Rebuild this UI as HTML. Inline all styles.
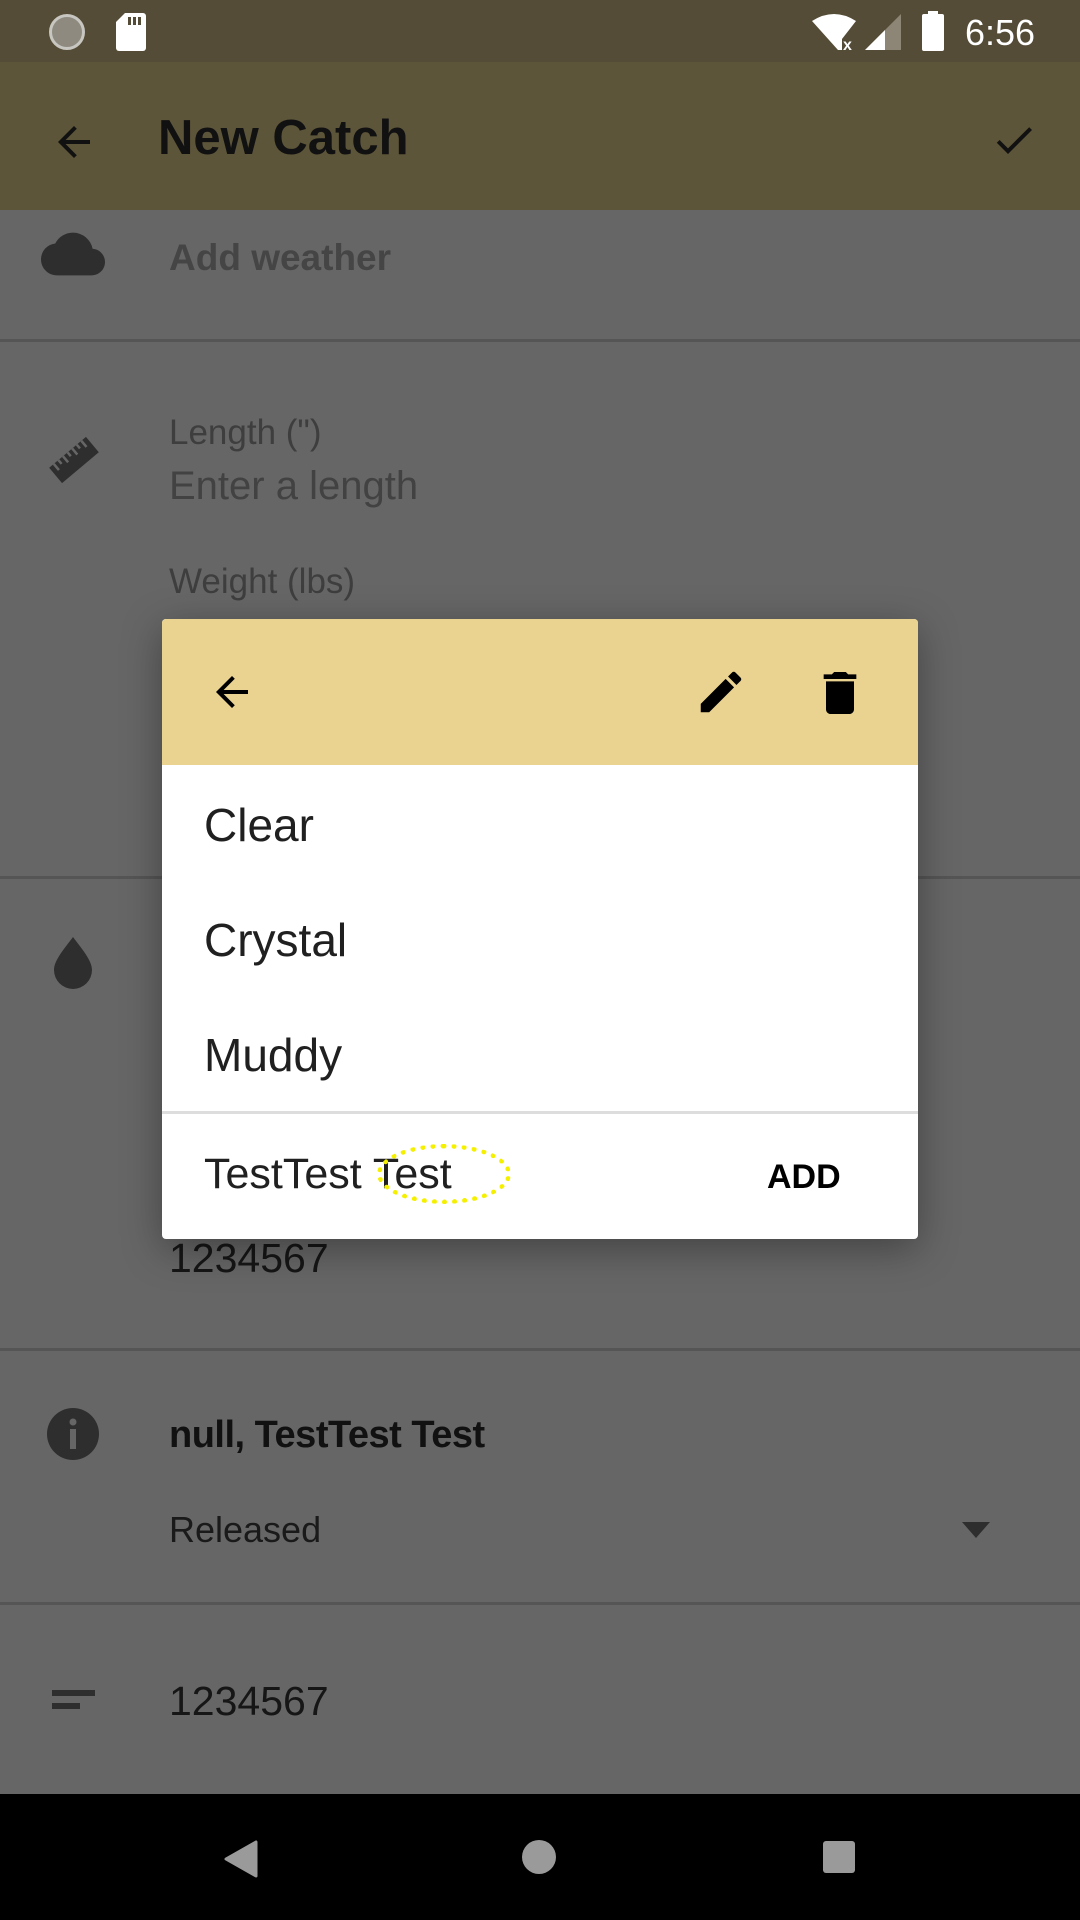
<!DOCTYPE html>
<html><head><meta charset="utf-8"><style>
*{margin:0;padding:0;box-sizing:border-box}
body{width:1080px;height:1920px;position:relative;overflow:hidden;background:#666;font-family:"Liberation Sans",sans-serif}
.t{position:absolute;white-space:nowrap;line-height:1}
.hr{position:absolute;left:0;width:1080px;height:3px;background:#555}
svg{position:absolute}
</style></head><body>
<div style="position:absolute;left:0;top:0;width:1080px;height:62px;background:#544c36"></div>
<div style="position:absolute;left:0;top:62px;width:1080px;height:148px;background:#5d5539"></div>
<div style="position:absolute;left:49px;top:14px;width:36px;height:36px;border-radius:50%;background:#8e8a80;border:3px solid #c8c6c0"></div>
<svg style="left:116px;top:13px" width="30" height="38" viewBox="0 0 30 38"><path d="M9 0H27a3 3 0 0 1 3 3V35a3 3 0 0 1-3 3H3a3 3 0 0 1-3-3V9Z" fill="#fff"/><rect x="12" y="4" width="3" height="8" fill="#544c36"/><rect x="17" y="4" width="3" height="8" fill="#544c36"/><rect x="22" y="4" width="3" height="8" fill="#544c36"/></svg>
<svg style="left:812px;top:13px" width="48" height="38" viewBox="0 0 48 38"><path d="M0 8Q22-6 44 8L30 26V37H26Z" fill="#fff"/><text x="31" y="37" font-size="16" font-weight="bold" fill="#fff" font-family="Liberation Sans">x</text></svg>
<svg style="left:865px;top:14px" width="36" height="36" viewBox="0 0 36 36"><path d="M36 0V36H0Z" fill="#8d8677"/><path d="M20 16V36H0Z" fill="#fff"/></svg>
<svg style="left:922px;top:11px" width="22" height="40" viewBox="0 0 22 40"><rect x="6" y="0" width="10" height="4" fill="#fff"/><rect x="0" y="3" width="22" height="37" rx="2" fill="#fff"/></svg>
<div class="t" style="left:965px;top:15px;font-size:36px;color:#fff">6:56</div>
<svg style="left:50px;top:118px" width="48" height="48" viewBox="0 0 24 24"><path d="M20 11H7.8l5.6-5.6L12 4l-8 8 8 8 1.4-1.4L7.8 13H20z" fill="#111"/></svg>
<div class="t" style="left:158px;top:114px;font-size:49px;color:#111;font-weight:bold">New Catch</div>
<svg style="left:990px;top:116px" width="48" height="48" viewBox="0 0 24 24"><path d="M9 16.2 4.8 12l-1.4 1.4L9 19 21 7l-1.4-1.4z" fill="#111"/></svg>
<svg style="left:41px;top:222px" width="64" height="64" viewBox="0 0 24 24"><path d="M19.35 10.04A7.49 7.49 0 0 0 12 4C9.11 4 6.6 5.64 5.35 8.04A5.99 5.99 0 0 0 0 14c0 3.31 2.69 6 6 6h13c2.76 0 5-2.24 5-5 0-2.64-2.05-4.780-4.65-4.96z" fill="#2e2e2e"/></svg>
<div class="t" style="left:169px;top:239px;font-size:37px;color:#454545;font-weight:bold">Add weather</div>
<div class="hr" style="top:339px"></div>
<svg style="left:44px;top:430px" width="60" height="60" viewBox="0 0 60 60"><g transform="rotate(-40 30 30)"><rect x="6" y="20" width="48" height="20" fill="#2e2e2e"/><g stroke="#666" stroke-width="2.5"><path d="M12 20v8M18 20v5M24 20v8M30 20v5M36 20v8M42 20v5M48 20v8"/></g></g></svg>
<div class="t" style="left:169px;top:415px;font-size:35px;color:#3e3e3e">Length (")</div>
<div class="t" style="left:169px;top:466px;font-size:40px;color:#424242">Enter a length</div>
<div class="t" style="left:169px;top:564px;font-size:35px;color:#3e3e3e">Weight (lbs)</div>
<div class="hr" style="top:876px"></div>
<svg style="left:53px;top:936px" width="40" height="54" viewBox="0 0 40 54"><path d="M20 1C12 12 1 24 1 34a19 19 0 0 0 38 0C39 24 28 12 20 1Z" fill="#2e2e2e"/></svg>
<div class="t" style="left:169px;top:1238px;font-size:41px;color:#161616">1234567</div>
<div class="hr" style="top:1348px"></div>
<svg style="left:47px;top:1408px" width="52" height="52" viewBox="0 0 52 52"><ellipse cx="26" cy="26" rx="26" ry="26" fill="#2e2e2e"/><rect x="23" y="21" width="6" height="20" fill="#666"/><circle cx="26" cy="14" r="3.5" fill="#666"/></svg>
<div class="t" style="left:169px;top:1416px;font-size:38px;color:#111;font-weight:bold;letter-spacing:-0.5px">null, TestTest Test</div>
<div class="t" style="left:169px;top:1512px;font-size:36px;color:#1a1a1a">Released</div>
<svg style="left:962px;top:1522px" width="28" height="16" viewBox="0 0 28 16"><path d="M0 0H28L14 16Z" fill="#2e2e2e"/></svg>
<div class="hr" style="top:1602px"></div>
<svg style="left:52px;top:1690px" width="44" height="20" viewBox="0 0 44 20"><rect x="0" y="0" width="43" height="6" fill="#2e2e2e"/><rect x="0" y="13" width="28" height="6" fill="#2e2e2e"/></svg>
<div class="t" style="left:169px;top:1681px;font-size:41px;color:#161616">1234567</div>
<div style="position:absolute;left:0;top:1794px;width:1080px;height:126px;background:#000"></div>
<svg style="left:224px;top:1840px" width="34" height="38" viewBox="0 0 34 38"><path d="M32 2V36L2 19Z" fill="#9a9a9a" stroke="#9a9a9a" stroke-width="3" stroke-linejoin="round"/></svg>
<div style="position:absolute;left:522px;top:1840px;width:34px;height:34px;border-radius:50%;background:#9a9a9a"></div>
<div style="position:absolute;left:823px;top:1841px;width:32px;height:32px;border-radius:3px;background:#9a9a9a"></div>
<div style="position:absolute;left:162px;top:619px;width:756px;height:620px;background:#fff;border-radius:4px;overflow:hidden;box-shadow:0 10px 40px rgba(0,0,0,.35)">
<div style="position:absolute;left:0;top:0;width:756px;height:146px;background:#ead391"></div>
<svg style="left:46px;top:49px" width="48" height="48" viewBox="0 0 24 24"><path d="M20 11H7.8l5.6-5.6L12 4l-8 8 8 8 1.4-1.4L7.8 13H20z" fill="#000"/></svg>
<svg style="left:532px;top:46px" width="54" height="54" viewBox="0 0 24 24"><path d="M3 17.25V21h3.75L17.81 9.940l-3.75-3.75zM20.71 7.04a1 1 0 0 0 0-1.41l-2.34-2.34a1 1 0 0 0-1.41 0l-1.83 1.83 3.75 3.75z" fill="#000"/></svg>
<svg style="left:650px;top:46px" width="56" height="56" viewBox="0 0 24 24"><path d="M6 19c0 1.1.9 2 2 2h8c1.1 0 2-.9 2-2V7H6zM19 4h-3.5l-1-1h-5l-1 1H5v2h14z" fill="#000"/></svg>
<div class="t" style="left:42px;top:183px;font-size:46px;color:#202020">Clear</div>
<div class="t" style="left:42px;top:298px;font-size:46px;color:#202020">Crystal</div>
<div class="t" style="left:42px;top:413px;font-size:46px;color:#202020">Muddy</div>
<div style="position:absolute;left:0;top:492px;width:756px;height:3px;background:#ddd"></div>
<div class="t" style="left:42px;top:534px;font-size:43px;color:#202020">TestTest Test</div>
<div style="position:absolute;left:215px;top:525px;width:134px;height:60px;border:5px dotted #f5f000;border-radius:50%"></div>
<div class="t" style="left:605px;top:541px;font-size:34px;color:#000;font-weight:bold">ADD</div>
</div>
</body></html>
